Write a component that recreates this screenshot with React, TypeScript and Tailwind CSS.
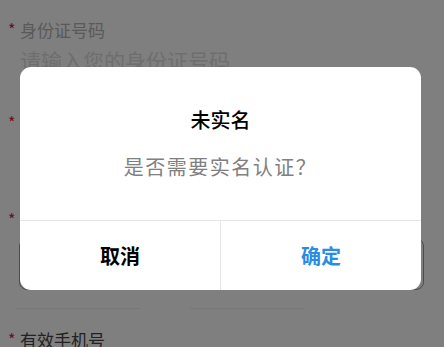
const font = { fontFamily: '"Noto Sans CJK SC", "Noto Sans", sans-serif' };

const Field = ({ label, dim, className, children }: { label?: string; dim?: boolean; className: string; children?: React.ReactNode }) => (
  <div className={className}>
    <div className="flex items-center h-[24px]">
      <span className="w-[20px] pl-[8px] text-[16px] leading-none text-[#d6203c] -mt-[2px]">*</span>
      {label && <span className={`text-[17px] ${dim ? "text-[#b4b4b4]" : "text-[#444]"}`}>{label}</span>}
    </div>
    {children}
  </div>
);

const App = () => {
  return (
    <div className="relative w-[444px] h-[347px] overflow-hidden bg-white" style={font}>
      {/* form underneath */}
      <div className="pt-[18px]">
        <Field label="身份证号码" dim className="h-[93px]">
          <div className="pl-[20px] mt-[6px] text-[21px] leading-[24px] text-[#dcdcdc]">请输入您的身份证号码</div>
        </Field>
        <Field label="真实姓名" className="h-[97px]" />
        <Field label="联系地址" className="h-[120px]">
          <div className="ml-[19px] mr-[20px] mt-[6px] h-[52px] border border-[#999] rounded-[8px]" />
          <div className="flex gap-[50px] ml-[15px] mt-[18px]">
            <div className="w-[125px] border-t border-[#eee]" />
            <div className="w-[115px] border-t border-[#eee]" />
          </div>
        </Field>
        <Field label="有效手机号" className="h-[40px]" />
      </div>

      {/* overlay + dialog */}
      <div className="absolute inset-0 bg-black/50 pt-[67px] pl-[20px]">
        <div className="w-[401px] bg-white rounded-[11px] overflow-hidden">
          <div className="pt-[41px] pb-[41px] flex flex-col items-center">
            <div className="text-[20px] leading-[24px] text-black font-medium">未实名</div>
            <div className="mt-[23px] text-[20px] leading-[24px] tracking-[1.5px] text-[#808080]">是否需要实名认证？</div>
          </div>
          <div className="flex h-[70px] border-t border-[#e6e6e6]">
            <button className="flex-1 flex items-center justify-center text-[20px] font-bold text-black border-r border-[#e6e6e6]">
              取消
            </button>
            <button className="flex-1 flex items-center justify-center text-[20px] font-bold text-[#2a8ce6]">
              确定
            </button>
          </div>
        </div>
      </div>
    </div>
  );
};

export default App;
